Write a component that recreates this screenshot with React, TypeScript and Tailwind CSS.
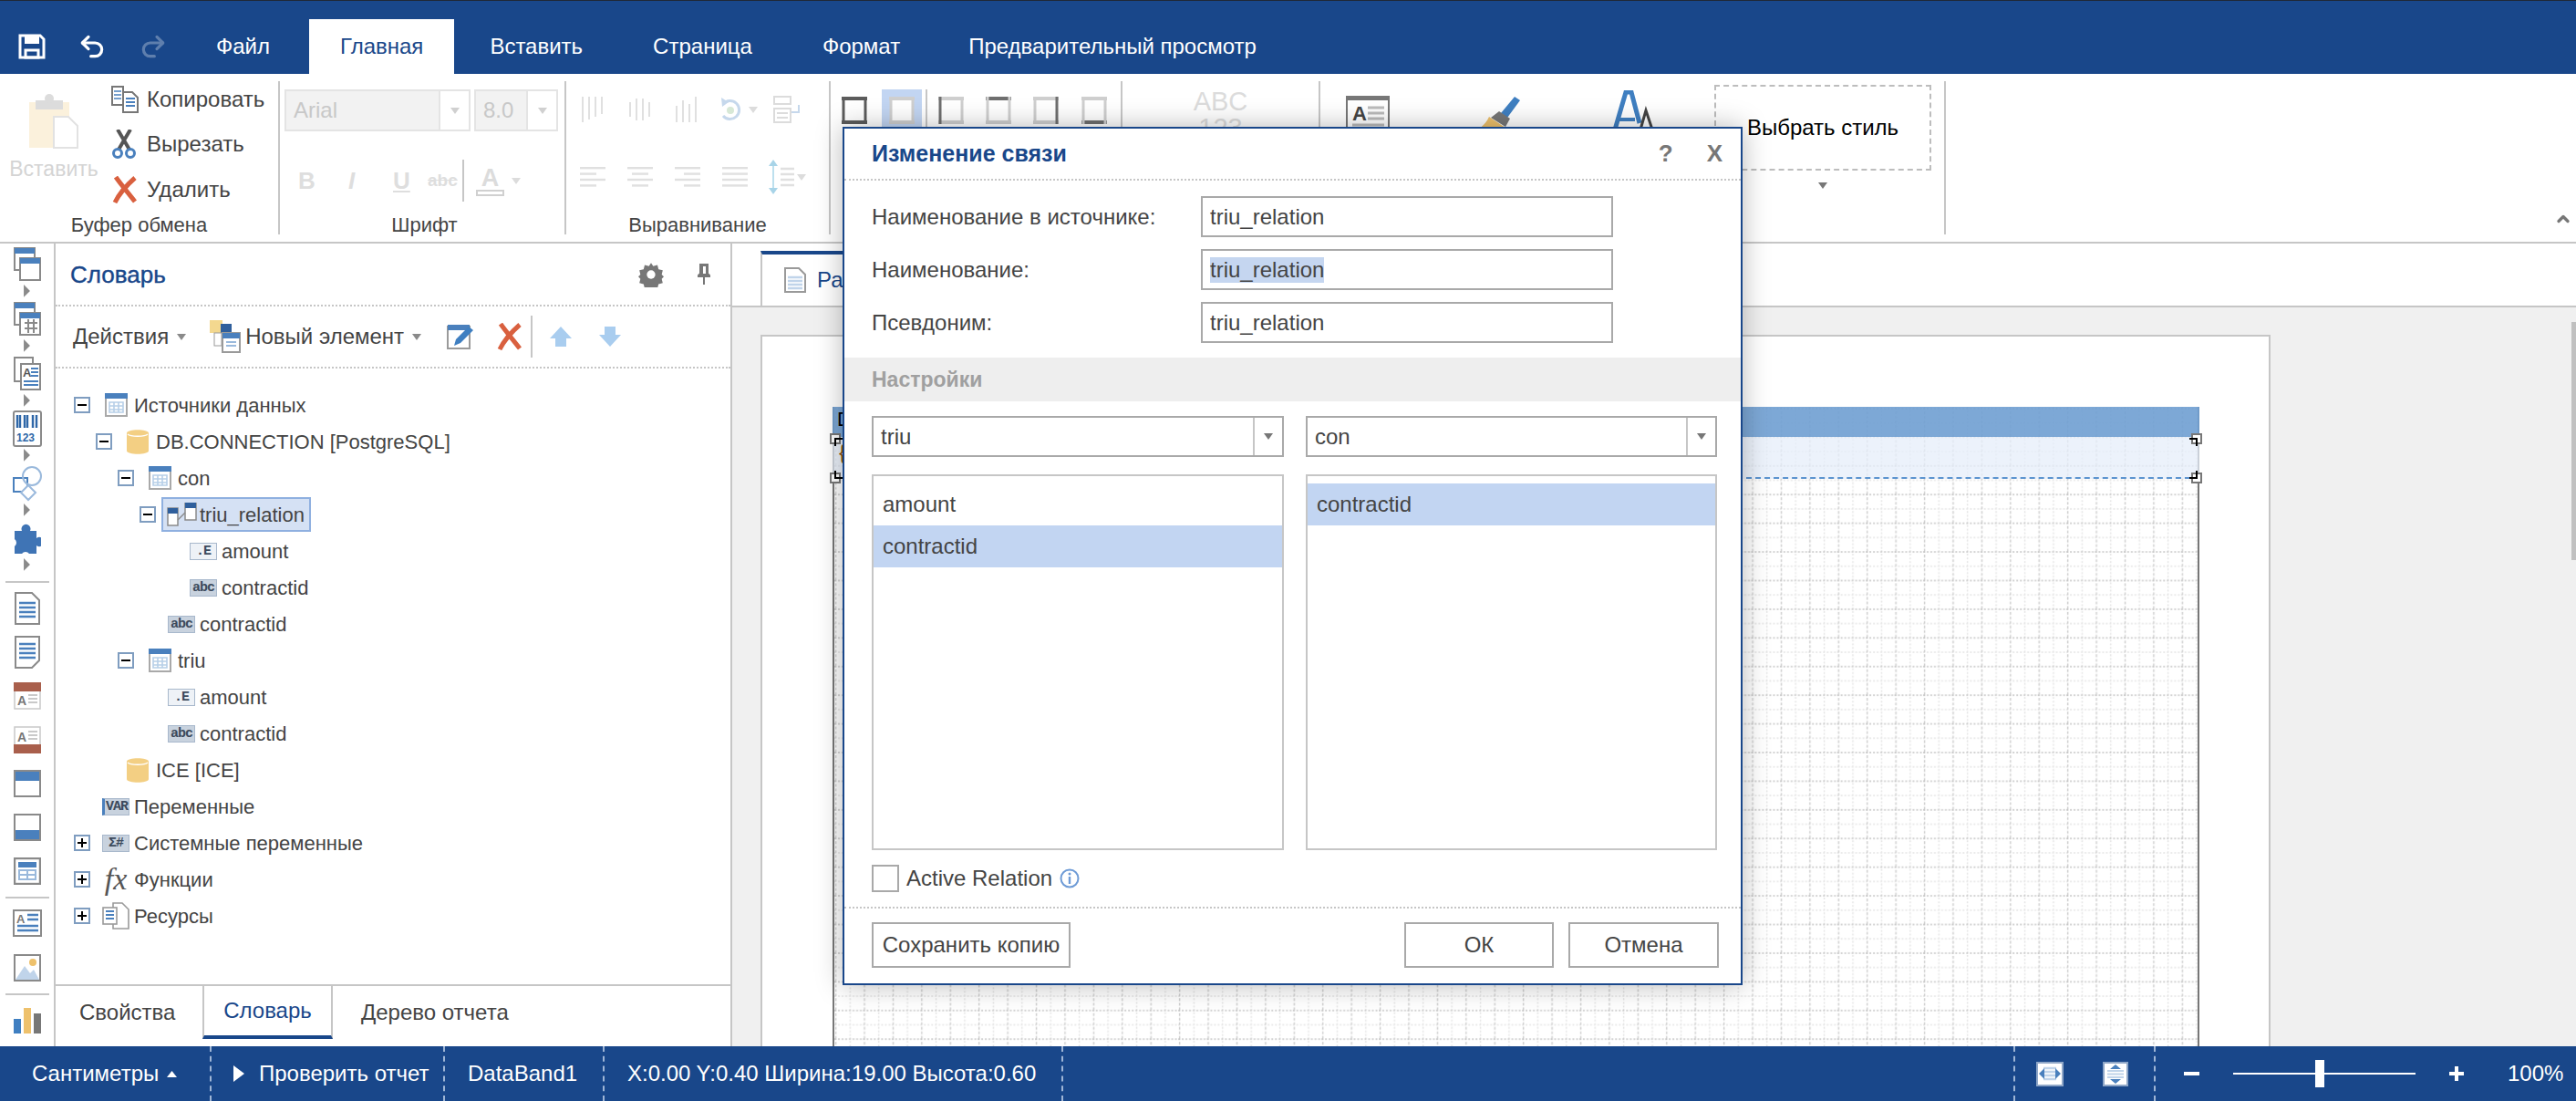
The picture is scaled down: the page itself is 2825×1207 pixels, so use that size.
import type { ReactNode } from "react";
import { Undo2, Redo2, ChevronUp } from "lucide-react";

const BLUE = "#4a80bd";

function Caret({ color = "#8a8a8a" }: { color?: string }) {
  return (
    <svg width="10" height="7" viewBox="0 0 10 7" className="shrink-0">
      <path d="M0 0h10L5 7z" fill={color} />
    </svg>
  );
}

function SaveIcon() {
  return (
    <svg width="30" height="28" viewBox="0 0 30 28" className="shrink-0">
      <path d="M2 2h22l4 4v20H2z" fill="none" stroke="#fff" strokeWidth="3" />
      <rect x="7" y="2" width="16" height="9" fill="#fff" />
      <rect x="8" y="18" width="14" height="8" fill="none" stroke="#fff" strokeWidth="3" />
    </svg>
  );
}

function PasteIcon() {
  return (
    <svg width="56" height="62" viewBox="0 0 56 62" className="shrink-0">
      <rect x="1" y="10" width="44" height="50" fill="#fbf1dc" />
      <rect x="8" y="8" width="30" height="10" fill="#dcdcdc" />
      <circle cx="23" cy="6" r="5" fill="#dcdcdc" />
      <path d="M28 26h16l10 10v24H28z" fill="#fff" stroke="#e2e2e2" strokeWidth="2" />
    </svg>
  );
}

function CopyIcon() {
  return (
    <svg width="30" height="30" viewBox="0 0 30 30" className="shrink-0">
      <path d="M1 1h12v20H1z" fill="#fff" stroke="#777" strokeWidth="2" />
      <path d="M3 6h8M3 10h8M3 14h8" stroke="#4a80bd" strokeWidth="1.5" />
      <path d="M13 7h10l6 6v16H13z" fill="#fff" stroke="#777" strokeWidth="2" />
      <path d="M16 14h10M16 18h10M16 22h10" stroke="#4a80bd" strokeWidth="2" />
    </svg>
  );
}

function CutIcon() {
  return (
    <svg width="28" height="32" viewBox="0 0 28 32" className="shrink-0">
      <path d="M7 0l13 22M21 0L8 22" stroke="#555" strokeWidth="4" />
      <circle cx="7" cy="26" r="4.5" fill="none" stroke="#4a80bd" strokeWidth="3" />
      <circle cx="21" cy="26" r="4.5" fill="none" stroke="#4a80bd" strokeWidth="3" />
    </svg>
  );
}

function CrossIcon({ size = 30 }: { size?: number }) {
  return (
    <svg width={size} height={size} viewBox="0 0 30 30" className="shrink-0">
      <path d="M5 1c4 6 14 18 21 27M26 2C18 9 9 19 4 29" fill="none" stroke="#d9603f" strokeWidth="5" />
    </svg>
  );
}

function AlignBars({ variant }: { variant: string }) {
  const xs = [2, 9, 16, 23];
  const tops: Record<string, number[]> = {
    t: [0, 0, 0, 0],
    m: [6, 2, 2, 6],
    b: [10, 4, 8, 0],
  };
  const t = tops[variant];
  return (
    <svg width="26" height="28" viewBox="0 0 26 28" className="shrink-0">
      {xs.map((x, i) => (
        <rect key={x} x={x} y={t[i]} width="2" height={28 - t[i] - (variant === "t" ? i * 3 : variant === "m" ? t[i] : 0)} fill="#e0e0e0" />
      ))}
    </svg>
  );
}

function RotateIcon() {
  return (
    <svg width="26" height="30" viewBox="0 0 26 30" className="shrink-0">
      <path d="M5 9a10 10 0 1 1 0 13" fill="none" stroke="#c6d8ec" strokeWidth="3" />
      <path d="M3 2l8 5-7 5z" fill="#c6d8ec" />
      <circle cx="13" cy="16" r="4" fill="#d7e8d6" />
    </svg>
  );
}

function WrapIcon() {
  return (
    <svg width="32" height="30" viewBox="0 0 32 30" className="shrink-0">
      <rect x="1" y="1" width="18" height="8" fill="none" stroke="#dcdcdc" strokeWidth="2" />
      <path d="M1 14h18v15H1z" fill="none" stroke="#dcdcdc" strokeWidth="2" />
      <path d="M4 19h12M4 24h12" stroke="#dcdcdc" strokeWidth="2" />
      <path d="M28 10v8h-8" fill="none" stroke="#c6d8ec" strokeWidth="2" />
    </svg>
  );
}

function TextAlign({ variant }: { variant: "l" | "c" | "r" | "j" }) {
  const rows = [28, 18, 28, 18];
  return (
    <svg width="28" height="22" viewBox="0 0 28 22" className="shrink-0">
      {rows.map((w, i) => {
        const width = variant === "j" ? 28 : w;
        const x = variant === "l" || variant === "j" ? 0 : variant === "c" ? (28 - width) / 2 : 28 - width;
        return <rect key={i} x={x} y={i * 6.4} width={width} height="2.4" fill="#e0e0e0" />;
      })}
    </svg>
  );
}

function LineSpacing() {
  return (
    <svg width="30" height="40" viewBox="0 0 30 40" className="shrink-0">
      <path d="M6 4v32" stroke="#bde0ee" strokeWidth="2" />
      <path d="M1 8l5-7 5 7zM1 32l5 7 5-7z" fill="#a8d4e8" />
      <path d="M14 11h15M14 17h15M14 23h15M14 29h15" stroke="#e0e0e0" strokeWidth="2.4" />
    </svg>
  );
}

function BorderIcon({ sides, strong }: { sides: string; strong?: boolean }) {
  const dark = strong ? "#5c5c5c" : "#6f6f6f";
  const light = "#cfcfcf";
  return (
    <svg width="28" height="30" viewBox="0 0 28 30" className="shrink-0">
      <rect x="2" y="2" width="24" height="26" fill="#fff" />
      <path d="M0 2h28" stroke={sides.includes("t") ? dark : light} strokeWidth="4" />
      <path d="M0 28h28" stroke={sides.includes("b") ? dark : light} strokeWidth="4" />
      <path d="M2 0v30" stroke={sides.includes("l") ? dark : light} strokeWidth="3" />
      <path d="M26 0v30" stroke={sides.includes("r") ? dark : light} strokeWidth="3" />
    </svg>
  );
}

function FormIcon() {
  return (
    <svg width="52" height="46" viewBox="0 0 52 46" className="shrink-0">
      <rect x="1" y="1" width="46" height="44" fill="#fff" stroke="#777" strokeWidth="2" />
      <rect x="1" y="1" width="46" height="4" fill="#777" />
      <text x="7" y="27" fontSize="22" fontWeight="700" fill="#444" fontFamily="Liberation Sans">A</text>
      <path d="M24 13h18M24 19h18M24 25h18M7 32h35M7 38h35" stroke="#bbb" strokeWidth="3" />
    </svg>
  );
}

function BrushIcon() {
  return (
    <svg width="58" height="60" viewBox="0 0 58 60" className="shrink-0">
      <path d="M48 1l6 4-14 19-7-5z" fill="#3f7fc1" />
      <path d="M31 17l12 8-5 9-16-10z" fill="#777" />
      <path d="M20 23l18 12c-4 8-10 14-14 18L0 40c8-2 16-8 20-17z" fill="#eec16c" />
    </svg>
  );
}

function FontStyleIcon() {
  return (
    <svg width="56" height="66" viewBox="0 0 56 66" className="shrink-0">
      <path d="M2 50L16 2h6l9 34" fill="none" stroke="#3f7fc1" strokeWidth="5" />
      <path d="M8 32h18" stroke="#3f7fc1" strokeWidth="4" />
      <path d="M26 64l12-42 14 42" fill="none" stroke="#444" strokeWidth="3" />
    </svg>
  );
}

function Vr({ className = "" }: { className?: string }) {
  return <div className={`w-[2px] shrink-0 bg-[#c6c6c6] ${className}`} />;
}

function GroupLabel({ children }: { children: ReactNode }) {
  return <div className="text-center text-[22px] leading-[20px] text-[#444]">{children}</div>;
}

function Combo({ text, w, split }: { text: string; w: string; split: string }) {
  return (
    <div className={`flex h-[46px] items-center border-2 border-[#e4e4e4] bg-[#f2f2f2] ${w}`}>
      <span className="flex-1 pl-[8px] text-[24px] text-[#c8c8c8]">{text}</span>
      <span className={`flex h-full items-center justify-center border-l-2 border-[#e4e4e4] bg-white ${split}`}>
        <Caret color="#d0d0d0" />
      </span>
    </div>
  );
}

function Ribbon() {
  return (
    <div className="relative flex h-[186px] shrink-0 border-b-2 border-[#c6c6c6] bg-white pt-[8px]">
      {/* clipboard */}
      <div className="flex h-[168px] w-[305px] shrink-0 flex-col">
        <div className="flex h-[134px]">
          <div className="flex w-[117px] shrink-0 flex-col items-center pt-[13px] pl-[1px]">
            <PasteIcon />
            <span className="mt-[10px] text-[23px] leading-none text-[#d4d4d4]">Вставить</span>
          </div>
          <div className="-mt-[5px] flex flex-col">
            {[
              [<CopyIcon key="c" />, "Копировать"],
              [<CutIcon key="x" />, "Вырезать"],
              [<CrossIcon key="d" />, "Удалить"],
            ].map(([icon, label], i) => (
              <div key={i} className="flex h-[49.5px] shrink-0 items-center text-[24px] text-[#444]">
                <span className="flex w-[44px] justify-start pl-[5px]">{icon}</span>
                {label}
              </div>
            ))}
          </div>
        </div>
        <div className="mt-auto"><GroupLabel>Буфер обмена</GroupLabel></div>
      </div>
      <Vr className="h-[168px]" />
      {/* font */}
      <div className="flex h-[168px] w-[312px] shrink-0 flex-col pl-[5px]">
        <div className="mt-[9px] flex gap-[4px]">
          <Combo text="Arial" w="w-[204px]" split="w-[33px]" />
          <Combo text="8.0" w="w-[92px]" split="w-[33px]" />
        </div>
        <div className="mt-[31px] flex h-[46px] items-center text-[#dedede]">
          <span className="w-[50px] pl-[15px] text-[26px] font-bold">B</span>
          <span className="w-[54px] pl-[20px] text-[26px] font-bold italic">I</span>
          <span className="w-[52px] pl-[15px] text-[26px] font-bold underline">U</span>
          <span className="w-[39px] pl-[1px] text-[19px] font-bold line-through">abc</span>
          <Vr className="mr-[13px] h-[46px]" />
          <span className="flex flex-col items-center">
            <span className="text-[27px] leading-[26px] font-bold text-[#dcdcdc]">A</span>
            <span className="h-[7px] w-[31px] border-2 border-[#d0d0d0] bg-white" />
          </span>
          <span className="ml-[8px]"><Caret color="#dcdcdc" /></span>
        </div>
        <div className="mt-auto"><GroupLabel>Шрифт</GroupLabel></div>
      </div>
      <Vr className="h-[168px]" />
      {/* align */}
      <div className="flex h-[168px] w-[288px] shrink-0 flex-col">
        <div className="mt-[16px] flex items-center pl-[15px]">
          <AlignBars variant="t" />
          <span className="ml-[26px]"><AlignBars variant="m" /></span>
          <span className="ml-[25px]"><AlignBars variant="b" /></span>
          <span className="ml-[23px]"><RotateIcon /></span>
          <span className="ml-[7px]"><Caret color="#dcdcdc" /></span>
          <span className="ml-[17px]"><WrapIcon /></span>
        </div>
        <div className="mt-[39px] flex items-center pl-[15px]">
          <TextAlign variant="l" />
          <span className="ml-[24px]"><TextAlign variant="c" /></span>
          <span className="ml-[24px]"><TextAlign variant="r" /></span>
          <span className="ml-[24px]"><TextAlign variant="j" /></span>
          <span className="ml-[22px]"><LineSpacing /></span>
          <span className="ml-[2px]"><Caret color="#dcdcdc" /></span>
        </div>
        <div className="mt-auto"><GroupLabel>Выравнивание</GroupLabel></div>
      </div>
      <Vr className="h-[168px]" />
      {/* borders */}
      <div className="flex h-[168px] w-[318px] shrink-0 items-start pl-[12px] pt-[9px]">
        <span className="flex h-[46px] items-center pr-[16px]"><BorderIcon sides="tblr" strong /></span>
        <span className="flex h-[46px] w-[44px] items-center justify-center bg-[#c2d5f2]"><BorderIcon sides="" /></span>
        <Vr className="ml-[4px] h-[42px]" />
        <span className="flex h-[46px] items-center pl-[12px]"><BorderIcon sides="l" /></span>
        <span className="flex h-[46px] items-center pl-[24px]"><BorderIcon sides="t" /></span>
        <span className="flex h-[46px] items-center pl-[24px]"><BorderIcon sides="r" /></span>
        <span className="flex h-[46px] items-center pl-[25px]"><BorderIcon sides="b" /></span>
      </div>
      <Vr className="h-[168px]" />
      <div className="flex h-[168px] w-[215px] shrink-0 flex-col items-center pt-[8px] text-[29px] leading-[29px] text-[#dcdcdc]">
        <span>ABC</span>
        <span>123</span>
      </div>
      <Vr className="h-[168px]" />
      {/* style */}
      <div className="flex h-[168px] w-[432px] shrink-0 items-start pl-[28px] pt-[16px]">
        <FormIcon />
        <span className="ml-[85px]"><BrushIcon /></span>
        <span className="-mt-[6px] ml-[96px]"><FontStyleIcon /></span>
      </div>
      <div className="flex h-[168px] w-[252px] shrink-0 flex-col items-start">
        <div className="mt-[4px] flex h-[94px] w-[238px] items-center justify-center border-2 border-dashed border-[#bdbdbd] text-[24px] text-black">
          Выбрать стиль
        </div>
        <span className="mt-[13px] ml-[114px]"><Caret color="#777" /></span>
      </div>
      <Vr className="h-[168px]" />
      <ChevronUp className="absolute right-[4px] top-[149px] h-[20px] w-[20px] text-[#777]" strokeWidth={4} />
    </div>
  );
}

function Frame({ top, bottom, children }: { top?: boolean; bottom?: boolean; children?: ReactNode }) {
  return (
    <div className="relative h-[30px] w-[30px] border-2 border-[#8a8a8a] bg-white">
      {top && <div className="h-[10px] bg-[#4a80bd]" />}
      {children}
      {bottom && <div className="absolute inset-x-0 bottom-0 h-[10px] bg-[#4a80bd]" />}
    </div>
  );
}

function BandIcon({ kind }: { kind: number }) {
  return (
    <svg width="30" height="38" viewBox="0 0 30 38">
      <rect x="1" y="1" width="22" height="24" fill="#fff" stroke="#8a8a8a" strokeWidth="2" />
      <rect x="1" y="1" width="22" height="6" fill={BLUE} />
      <rect x="7" y="12" width="22" height="24" fill="#fff" stroke="#8a8a8a" strokeWidth="2" />
      <rect x="7" y="12" width="22" height="6" fill={BLUE} />
      {kind === 1 && <path d="M12 23h14M12 29h14M16 19v15M22 19v15" stroke="#8a8a8a" strokeWidth="2" />}
    </svg>
  );
}

function SideIcons() {
  const top = [
    <BandIcon key="a" kind={0} />,
    <BandIcon key="b" kind={1} />,
    <svg key="c" width="30" height="38" viewBox="0 0 30 38">
      <rect x="1" y="1" width="20" height="26" fill="#fff" stroke="#8a8a8a" strokeWidth="2" />
      <rect x="8" y="8" width="21" height="28" fill="#fff" stroke="#8a8a8a" strokeWidth="2" />
      <text x="10" y="22" fontSize="13" fontWeight="700" fill="#555" fontFamily="Liberation Sans">A</text>
      <path d="M19 13h8M19 17h8M19 21h8M11 27h16M11 31h16" stroke={BLUE} strokeWidth="2" />
    </svg>,
    <svg key="d" width="32" height="40" viewBox="0 0 32 40">
      <rect x="1" y="1" width="30" height="38" rx="2" fill="#fff" stroke="#8a8a8a" strokeWidth="2" />
      <path d="M5 5v14M8 5v14M13 5v14M16 5v14M22 5v14M26 5v14" stroke="#2f67a8" strokeWidth="2.4" />
      <text x="4" y="34" fontSize="12" fontWeight="700" fill="#2f67a8" fontFamily="Liberation Sans">123</text>
    </svg>,
    <svg key="e" width="32" height="40" viewBox="0 0 32 40">
      <rect x="1" y="14" width="15" height="15" fill="#fff" stroke={BLUE} strokeWidth="2" />
      <circle cx="21" cy="12" r="10" fill="none" stroke="#9ab9dc" strokeWidth="2" />
      <path d="M17 22l8 8-8 8-8-8z" fill="#fff" stroke="#9ab9dc" strokeWidth="2" />
    </svg>,
    <svg key="f" width="30" height="36" viewBox="0 0 30 36">
      <path d="M1 10h8a5 5 0 1 1 9 0h7v8a5 5 0 1 1 0 8v9h-8a5 5 0 0 0-8 0H1v-8a5 5 0 0 0 0-8z" fill="#3f74b5" />
    </svg>,
  ];
  const docs = (flip: boolean) => (
    <svg width="28" height="36" viewBox="0 0 28 36" className={flip ? "-scale-y-100" : ""}>
      <path d="M1 1h18l8 8v26H1z" fill="#fff" stroke="#8a8a8a" strokeWidth="2" />
      <path d="M5 12h18M5 17h18M5 22h18M5 27h18" stroke={BLUE} strokeWidth="2.6" />
    </svg>
  );
  const redBox = (flip: boolean) => (
    <svg width="30" height="30" viewBox="0 0 30 30">
      <rect x="1" y="1" width="28" height="28" fill="#fff" stroke="#c9c9c9" strokeWidth="1.5" />
      <rect x="0" y={flip ? 20 : 0} width="30" height="10" fill="#a95f4c" />
      <text x="4" y={flip ? 17 : 25} fontSize="14" fontWeight="700" fill="#777" fontFamily="Liberation Sans">A</text>
      <path d={flip ? "M16 6h10M16 10h10M16 14h10" : "M16 14h10M16 18h10M16 22h10"} stroke="#c9c9c9" strokeWidth="2" />
    </svg>
  );
  const mid = [
    docs(false),
    docs(true),
    redBox(false),
    redBox(true),
    <Frame key="h" top />,
    <Frame key="f" bottom />,
    <svg key="t" width="30" height="30" viewBox="0 0 30 30">
      <rect x="1" y="1" width="28" height="28" fill="#fff" stroke="#8a8a8a" strokeWidth="2.4" />
      <rect x="5" y="5" width="20" height="6" fill={BLUE} />
      <path d="M6 14h18v10H6z M15 14v10M6 19h18" fill="none" stroke="#9ab9dc" strokeWidth="2" />
    </svg>,
  ];
  return (
    <div className="flex w-[61px] shrink-0 flex-col items-center border-r-2 border-[#c6c6c6] bg-white">
      {top.map((icon, i) => (
        <div key={i} className="flex h-[60px] w-full flex-col items-center justify-end">
          <div className="flex h-[46px] items-center">{icon}</div>
          <svg width="7" height="14" viewBox="0 0 7 14" className="mb-[1px]"><path d="M0 0l7 7-7 7z" fill="#8a8a8a" /></svg>
        </div>
      ))}
      <div className="mt-[10px] mb-[4px] h-[2px] w-[48px] bg-[#c6c6c6]" />
      {mid.map((icon, i) => (
        <div key={i} className="flex h-[48px] items-center">{icon}</div>
      ))}
      <div className="mt-[4px] mb-[3px] h-[2px] w-[48px] bg-[#c6c6c6]" />
      <div className="flex h-[48px] items-center">
        <svg width="32" height="30" viewBox="0 0 32 30">
          <rect x="1" y="1" width="30" height="28" fill="#fff" stroke="#8a8a8a" strokeWidth="2" />
          <text x="4" y="15" fontSize="13" fontWeight="700" fill="#777" fontFamily="Liberation Sans">A</text>
          <path d="M16 6h12M16 11h12M5 18h23M5 23h23" stroke={BLUE} strokeWidth="2.4" />
        </svg>
      </div>
      <div className="flex h-[49px] items-center">
        <svg width="30" height="30" viewBox="0 0 30 30">
          <rect x="1" y="1" width="28" height="28" fill="#fff" stroke="#8a8a8a" strokeWidth="2" />
          <circle cx="21" cy="9" r="4" fill="#eec16c" />
          <path d="M2 28l10-15 6 8 4-4 6 11z" fill="#c0d4ea" />
        </svg>
      </div>
      <div className="mt-[4px] mb-[4px] h-[2px] w-[48px] bg-[#c6c6c6]" />
      <div className="flex h-[48px] items-center">
        <svg width="30" height="28" viewBox="0 0 30 28">
          <rect x="0" y="12" width="8" height="16" fill="#3f7fc1" />
          <rect x="11" y="0" width="8" height="28" fill="#eec16c" />
          <rect x="22" y="6" width="8" height="22" fill="#777" />
        </svg>
      </div>
    </div>
  );
}

function TableIcon() {
  return (
    <svg width="25" height="26" viewBox="0 0 25 26">
      <rect x="1" y="1" width="23" height="24" fill="#fff" stroke="#a9a9a9" strokeWidth="2" />
      <rect x="0" y="0" width="25" height="6" fill={BLUE} />
      <path d="M5 10h15v11H5z M10 10v11M15 10v11M5 14h15M5 18h15" fill="none" stroke="#b7cfe8" strokeWidth="1.6" />
    </svg>
  );
}

function DbIcon() {
  return (
    <svg width="24" height="27" viewBox="0 0 24 27">
      <path d="M0 4c0-5 24-5 24 0v19c0 5-24 5-24 0z" fill="#f3cf83" />
      <path d="M1 5c3 3 19 3 22 0" fill="none" stroke="#fff" strokeWidth="1.4" />
    </svg>
  );
}

function RelationIcon() {
  return (
    <svg width="33" height="26" viewBox="0 0 33 26">
      <rect x="1" y="6" width="11" height="19" fill="#fff" stroke="#8a8a8a" strokeWidth="1.5" />
      <rect x="1" y="6" width="11" height="6" fill="#2f5f9c" />
      <rect x="20" y="0" width="12" height="19" fill="#fff" stroke="#8a8a8a" strokeWidth="1.5" />
      <rect x="20" y="0" width="12" height="6" fill="#2f5f9c" />
      <path d="M12 19l8-8" stroke="#8a8a8a" strokeWidth="1.5" />
    </svg>
  );
}

function TypeBox({ text, dark, leftBlue }: { text: string; dark?: boolean; leftBlue?: boolean }) {
  return (
    <span
      className={`flex h-[19px] w-[30px] items-center justify-center border border-[#a8b8cc] font-['Liberation_Mono',monospace] text-[15px] leading-none font-bold tracking-[-1px] text-[#3c4a5c] ${dark ? "bg-[#c8d2de]" : "bg-[#eef2f7]"} ${leftBlue ? "border-l-[3px] border-l-[#4a80bd]" : ""}`}
    >
      {text}
    </span>
  );
}

function FxIcon() {
  return <span className="font-['Liberation_Serif',serif] text-[34px] leading-none text-[#555] italic">fx</span>;
}

function ResIcon() {
  return (
    <svg width="30" height="30" viewBox="0 0 30 30">
      <path d="M12 1h10l7 7v21H12z" fill="#fff" stroke="#9a9a9a" strokeWidth="1.6" />
      <rect x="1" y="6" width="15" height="18" fill="#fff" stroke="#9a9a9a" strokeWidth="1.6" />
      <path d="M4 10h9M4 14h9M4 18h9" stroke={BLUE} strokeWidth="2" />
    </svg>
  );
}

function Toggle({ plus }: { plus?: boolean }) {
  return (
    <span className="relative flex h-[18px] w-[18px] shrink-0 items-center justify-center border-2 border-[#7f9dc0] bg-white">
      <span className="h-[2px] w-[10px] bg-black" />
      {plus && <span className="absolute h-[10px] w-[2px] bg-black" />}
    </span>
  );
}

type Node = {
  level: number;
  label: string;
  icon: ReactNode;
  toggle?: "minus" | "plus";
  selected?: boolean;
};

const nodes: Node[] = [
  { level: 0, label: "Источники данных", icon: <TableIcon />, toggle: "minus" },
  { level: 1, label: "DB.CONNECTION [PostgreSQL]", icon: <DbIcon />, toggle: "minus" },
  { level: 2, label: "con", icon: <TableIcon />, toggle: "minus" },
  { level: 3, label: "triu_relation", icon: <RelationIcon />, toggle: "minus", selected: true },
  { level: 4, label: "amount", icon: <TypeBox text=".E" /> },
  { level: 4, label: "contractid", icon: <TypeBox text="abc" dark /> },
  { level: 3, label: "contractid", icon: <TypeBox text="abc" dark /> },
  { level: 2, label: "triu", icon: <TableIcon />, toggle: "minus" },
  { level: 3, label: "amount", icon: <TypeBox text=".E" /> },
  { level: 3, label: "contractid", icon: <TypeBox text="abc" dark /> },
  { level: 1, label: "ICE [ICE]", icon: <DbIcon /> },
  { level: 0, label: "Переменные", icon: <TypeBox text="VAR" dark leftBlue /> },
  { level: 0, label: "Системные переменные", icon: <TypeBox text="Σ#" dark />, toggle: "plus" },
  { level: 0, label: "Функции", icon: <FxIcon />, toggle: "plus" },
  { level: 0, label: "Ресурсы", icon: <ResIcon />, toggle: "plus" },
];

function Tree() {
  return (
    <div className="flex-1 pt-[20px] text-[22px] text-[#444]">
      {nodes.map((n, i) => (
        <div key={i} className="flex h-[40px] items-center" style={{ paddingLeft: 20 + n.level * 24 }}>
          <span className="flex w-[18px] shrink-0 justify-center">
            {n.toggle && <Toggle plus={n.toggle === "plus"} />}
          </span>
          <div
            className={`ml-[6px] flex h-[38px] items-center border-2 pr-[5px] pl-[2px] ${n.selected ? "border-[#8fb0e0] bg-[#d5e1f4]" : "border-transparent"}`}
          >
            <span className="flex w-[36px] shrink-0 justify-center">{n.icon}</span>
            <span className="ml-[2px] whitespace-nowrap">{n.label}</span>
          </div>
        </div>
      ))}
    </div>
  );
}

function Dictionary() {
  return (
    <div className="flex w-[742px] shrink-0 flex-col border-r-2 border-[#c6c6c6] bg-white">
      <div className="flex h-[69px] shrink-0 items-center border-b-2 border-dotted border-[#c6c6c6] pl-[16px] pr-[22px]">
        <span className="flex-1 text-[26px] leading-none font-medium text-[#19478a] [-webkit-text-stroke:0.4px_#19478a]">Словарь</span>
        <svg width="28" height="28" viewBox="0 0 24 24" className="mr-[37px]">
          <path d="M12 1l2 3 4-1 1 4 4 1-1 4 2 2-2 2 1 4-4 1-1 4-4-1-2 2-2-2-4 1-1-4-4-1 1-4-2-2 2-2-1-4 4-1 1-4 4 1z" fill="#777" />
          <circle cx="12" cy="12" r="4" fill="#fff" />
        </svg>
        <svg width="14" height="24" viewBox="0 0 14 24">
          <path d="M3 1h8v10l3 3H0l3-3zM7 14v9" fill="#777" stroke="#777" strokeWidth="2" />
          <rect x="6" y="3" width="3" height="8" fill="#fff" />
        </svg>
      </div>
      <div className="flex h-[68px] shrink-0 items-center border-b-2 border-dotted border-[#c6c6c6] pl-[19px] text-[24px] text-[#444]">
        <span>Действия</span>
        <span className="ml-[9px]"><Caret /></span>
        <svg width="34" height="36" viewBox="0 0 34 36" className="ml-[26px]">
          <rect x="0" y="0" width="14" height="14" fill="#f3d88f" />
          <rect x="12" y="4" width="12" height="14" fill="#2f5f9c" />
          <rect x="5" y="14" width="8" height="14" fill="#fff" stroke="#9a9a9a" />
          <rect x="14" y="14" width="19" height="21" fill="#fff" stroke="#9a9a9a" strokeWidth="2" />
          <rect x="14" y="14" width="19" height="6" fill={BLUE} />
          <path d="M18 24h11M18 28h11" stroke="#9ab9dc" strokeWidth="2" />
        </svg>
        <span className="ml-[5px]">Новый элемент</span>
        <span className="ml-[9px]"><Caret /></span>
        <svg width="30" height="28" viewBox="0 0 30 28" className="ml-[28px]">
          <rect x="1" y="3" width="24" height="24" fill="#fff" stroke="#9a9a9a" strokeWidth="2" />
          <rect x="1" y="1" width="24" height="6" fill={BLUE} />
          <path d="M8 24l2-7L24 3l5 4-14 14z" fill="#3f7fc1" />
        </svg>
        <span className="ml-[24px]"><CrossIcon size={30} /></span>
        <Vr className="ml-[8px] h-[46px]" />
        <svg width="24" height="22" viewBox="0 0 24 22" className="ml-[19px]"><path d="M12 0l12 13h-6v9H6v-9H0z" fill="#a9cdef" /></svg>
        <svg width="24" height="22" viewBox="0 0 24 22" className="ml-[30px]"><path d="M6 0h12v9h6L12 22 0 9h6z" fill="#a9cdef" /></svg>
      </div>
      <Tree />
      <div className="flex h-[68px] shrink-0 items-start border-t-2 border-[#c6c6c6] text-[24px] text-[#444]">
        <div className="flex h-[58px] w-[161px] items-center pl-[26px]">Свойства</div>
        <div className="flex h-[58px] w-[143px] items-center justify-center border-x-2 border-b-[4px] border-x-[#c6c6c6] border-b-[#19478a] text-[#19478a]">Словарь</div>
        <div className="flex h-[58px] items-center pl-[31px]">Дерево отчета</div>
      </div>
    </div>
  );
}

function Grid() {
  return (
    <svg className="absolute inset-0 h-full w-full">
      <defs>
        <pattern id="grid" width="31.42" height="31.42" patternUnits="userSpaceOnUse">
          <path d="M17.3 0v31.42M0 17.7h31.42" stroke="#e4e4e4" strokeWidth="1.5" strokeDasharray="2 2" fill="none" />
          <path d="M1.6 0v31.42" stroke="#cfcfcf" strokeWidth="1.5" strokeDasharray="3 2" fill="none" />
          <path d="M0 2h31.42" stroke="#c4c4c4" strokeWidth="1.5" strokeDasharray="2 2" fill="none" />
        </pattern>
      </defs>
      <rect width="100%" height="100%" fill="url(#grid)" />
    </svg>
  );
}

function Handle({ className, mark }: { className: string; mark: string }) {
  return (
    <span className={`absolute h-[12px] w-[12px] border-2 border-[#777] bg-white ${className}`}>
      <span className={`absolute h-[9px] w-[9px] border-black ${mark}`} />
    </span>
  );
}

function Canvas() {
  return (
    <div className="flex min-w-0 flex-1 flex-col">
      <div className="flex h-[70px] shrink-0 items-end border-b-2 border-[#c6c6c6] bg-white pl-[31px]">
        <div className="flex h-[60px] w-[400px] items-center border-t-[4px] border-l-2 border-t-[#19478a] border-l-[#c6c6c6] pl-[24px] text-[24px] text-[#19478a]">
          <svg width="24" height="28" viewBox="0 0 24 28">
            <path d="M1 1h15l7 7v19H1z" fill="#fff" stroke="#9a9a9a" strokeWidth="2" />
            <path d="M4 11h16M4 15h16M4 19h16M4 23h16" stroke="#c0d4ea" strokeWidth="2.4" />
          </svg>
          <span className="ml-[12px]">Ра</span>
        </div>
      </div>
      <div className="relative min-h-0 flex-1 overflow-hidden bg-[#f0f0f0] pt-[30px] pl-[31px]">
        <div className="h-full w-[1656px] border-x-2 border-t-2 border-[#c6c6c6] bg-white pt-[77px] pl-[77px]">
          <div className="relative h-full w-[1499px] border-x-2 border-[#777]">
            <Grid />
            <div className="absolute -inset-x-[2px] top-0 h-[33px] bg-[#6f9fd2]/90 pl-[5px] text-[22px] leading-[28px] text-black">DataBand1</div>
            <div className="absolute -inset-x-[2px] top-[33px] h-[46px] border-b-2 border-dashed border-[#5b93cf] bg-[#e6eef9]/75 pl-[7px] text-[22px] text-[#8a4b00]">{"{"}</div>
            <Handle className="top-[29px] -left-[5px]" mark="left-[3px] top-[3px] border-t-2 border-l-2" />
            <Handle className="top-[72px] -left-[5px]" mark="left-[3px] bottom-[3px] border-b-2 border-l-2" />
            <Handle className="top-[29px] -right-[5px]" mark="right-[3px] top-[3px] border-t-2 border-r-2" />
            <Handle className="top-[72px] -right-[5px]" mark="right-[3px] bottom-[3px] border-b-2 border-r-2" />
          </div>
        </div>
        <div className="absolute top-[16px] right-0 h-[261px] w-[5px] bg-[#c0c0c0]" />
      </div>
    </div>
  );
}

function Field({ label, selected }: { label: string; selected?: boolean }) {
  return (
    <div className="flex h-[45px] items-center">
      <span className="w-[361px] text-[24px] leading-[26px] text-[#444]">{label}</span>
      <div className="flex h-full w-[452px] items-center border-2 border-[#a9a9a9] pl-[8px] text-[24px] text-[#444]">
        <span className={selected ? "bg-[#c5d6f0] leading-[28px]" : ""}>triu_relation</span>
      </div>
    </div>
  );
}

function Select({ value, w }: { value: string; w: string }) {
  return (
    <div className={`flex h-[45px] items-center border-2 border-[#a9a9a9] text-[24px] text-[#444] ${w}`}>
      <span className="flex-1 pl-[8px]">{value}</span>
      <span className="flex h-full w-[32px] items-center justify-center border-l-2 border-[#c6c6c6]">
        <Caret color="#777" />
      </span>
    </div>
  );
}

function ListBox({ items, active, w }: { items: string[]; active: string; w: string }) {
  return (
    <div className={`h-[412px] border-2 border-[#c6c6c6] pt-[8px] text-[24px] text-[#444] ${w}`}>
      {items.map((it) => (
        <div key={it} className={`flex h-[46px] items-center pl-[10px] ${it === active ? "bg-[#c2d5f2]" : ""}`}>
          {it}
        </div>
      ))}
    </div>
  );
}

function DialogButton({ children, w }: { children: ReactNode; w: string }) {
  return (
    <button className={`h-[50px] border-2 border-[#a9a9a9] bg-white text-[24px] text-[#444] ${w}`}>{children}</button>
  );
}

function Dialog() {
  return (
    <div className="absolute top-[139px] left-[924px] flex h-[941px] w-[987px] flex-col border-2 border-[#19478a] bg-white shadow-[0_0_28px_rgba(0,0,0,0.28)]">
      <div className="flex h-[57px] shrink-0 items-center border-b-2 border-dotted border-[#c6c6c6] pr-[20px] pl-[30px]">
        <span className="flex-1 text-[25px] font-bold text-[#19478a]">Изменение связи</span>
        <span className="text-[26px] font-bold text-[#777]">?</span>
        <span className="ml-[37px] text-[26px] font-bold text-[#777]">X</span>
      </div>
      <div className="flex flex-col gap-[13px] pt-[17px] pl-[30px]">
        <Field label="Наименование в источнике:" />
        <Field label="Наименование:" selected />
        <Field label="Псевдоним:" />
      </div>
      <div className="mt-[16px] flex h-[48px] shrink-0 items-center bg-[#eeeeee] pl-[30px] text-[23px] font-bold text-[#a0a0a0]">
        Настройки
      </div>
      <div className="mt-[16px] flex gap-[24px] pl-[30px]">
        <Select value="triu" w="w-[452px]" />
        <Select value="con" w="w-[451px]" />
      </div>
      <div className="mt-[19px] flex gap-[24px] pl-[30px]">
        <ListBox items={["amount", "contractid"]} active="contractid" w="w-[452px]" />
        <ListBox items={["contractid"]} active="contractid" w="w-[451px]" />
      </div>
      <div className="mt-[16px] flex h-[30px] items-center pl-[30px] text-[24px] text-[#444]">
        <span className="h-[30px] w-[30px] border-2 border-[#a9a9a9]" />
        <span className="ml-[8px]">Active Relation</span>
        <svg width="22" height="22" viewBox="0 0 22 22" className="ml-[8px]">
          <circle cx="11" cy="11" r="9.5" fill="none" stroke="#6e9bd6" strokeWidth="2" />
          <path d="M11 9v8" stroke="#6e9bd6" strokeWidth="2.4" />
          <circle cx="11" cy="6" r="1.5" fill="#6e9bd6" />
        </svg>
      </div>
      <div className="mt-[16px] flex flex-1 items-start border-t-2 border-dotted border-[#c6c6c6] pt-[15px] pr-[24px] pl-[30px]">
        <DialogButton w="w-[218px]">Сохранить копию</DialogButton>
        <span className="flex-1" />
        <DialogButton w="w-[164px]">ОК</DialogButton>
        <span className="w-[16px]" />
        <DialogButton w="w-[165px]">Отмена</DialogButton>
      </div>
    </div>
  );
}

function Dash() {
  return <div className="h-full w-0 shrink-0 border-l-2 border-dashed border-[#9fb6d6]" />;
}

function StatusBar() {
  return (
    <div className="flex h-[60px] shrink-0 items-center bg-[#19478a] text-[24px] text-white">
      <div className="flex w-[230px] shrink-0 items-center pl-[35px]">
        Сантиметры
        <svg width="11" height="7" viewBox="0 0 11 7" className="ml-[9px]"><path d="M0 7h11L5.5 0z" fill="#fff" /></svg>
      </div>
      <Dash />
      <div className="flex w-[254px] shrink-0 items-center pl-[24px]">
        <svg width="12" height="18" viewBox="0 0 12 18"><path d="M0 0l12 9-12 9z" fill="#fff" /></svg>
        <span className="ml-[16px]">Проверить отчет</span>
      </div>
      <Dash />
      <div className="w-[173px] shrink-0 pl-[25px]">DataBand1</div>
      <Dash />
      <div className="w-[501px] shrink-0 pl-[25px]">X:0.00 Y:0.40 Ширина:19.00 Высота:0.60</div>
      <Dash />
      <div className="flex-1" />
      <Dash />
      <div className="flex w-[152px] shrink-0 items-center pl-[23px]">
        <svg width="30" height="27" viewBox="0 0 30 27">
          <rect x="1" y="1" width="28" height="25" fill="#fff" stroke="#8fa7c8" strokeWidth="2" />
          <path d="M8 7h14M8 11h14M8 15h14M8 19h14" stroke="#c0d4ea" strokeWidth="2.6" />
          <path d="M3 13l6-6v12zM27 13l-6-6v12z" fill="#4a80bd" />
        </svg>
        <svg width="28" height="27" viewBox="0 0 28 27" className="ml-[43px]">
          <rect x="1" y="1" width="26" height="25" fill="#fff" stroke="#8fa7c8" strokeWidth="2" />
          <path d="M5 10h18M5 13.5h18M5 17h18" stroke="#c0d4ea" strokeWidth="2.2" />
          <path d="M14 3l6 5H8zM14 24l6-5H8z" fill="#4a80bd" />
        </svg>
      </div>
      <Dash />
      <div className="ml-[31px] h-[4px] w-[17px] shrink-0 bg-white" />
      <div className="relative ml-[37px] flex h-[30px] w-[200px] shrink-0 items-center">
        <div className="h-[2px] w-full bg-white" />
        <div className="absolute left-[90px] h-[30px] w-[10px] bg-white" />
      </div>
      <div className="relative ml-[37px] h-[16px] w-[16px] shrink-0">
        <div className="absolute top-[6px] h-[4px] w-full bg-white" />
        <div className="absolute left-[6px] h-full w-[4px] bg-white" />
      </div>
      <div className="ml-[48px] w-[75px] shrink-0">100%</div>
    </div>
  );
}

export default function App() {
  return (
    <div className="relative flex h-screen flex-col overflow-hidden bg-white font-['Liberation_Sans',Arial,sans-serif]">
      <div className="flex h-[81px] shrink-0 items-end border-t border-[#1f2937] bg-[#19478a] text-[24px] text-white">
        <div className="flex h-[60px] items-center pl-[20px]">
          <SaveIcon />
          <Undo2 className="ml-[35px] h-[32px] w-[32px] text-white" strokeWidth={2.4} />
          <Redo2 className="ml-[35px] h-[32px] w-[32px] text-white opacity-30" strokeWidth={2.4} />
        </div>
        <div className="ml-[19px] flex h-[60px] items-center">
          <div className="flex h-full items-center px-[34px]">Файл</div>
          <div className="ml-[9px] flex h-full items-center bg-white px-[34px] text-[#19478a]">Главная</div>
          <div className="ml-[5px] flex h-full items-center px-[34px]">Вставить</div>
          <div className="ml-[9px] flex h-full items-center px-[34px]">Страница</div>
          <div className="ml-[9px] flex h-full items-center px-[34px]">Формат</div>
          <div className="ml-[7px] flex h-full items-center px-[34px]">Предварительный просмотр</div>
        </div>
      </div>
      <Ribbon />
      <div className="flex min-h-0 flex-1">
        <SideIcons />
        <Dictionary />
        <Canvas />
      </div>
      <StatusBar />
      <Dialog />
    </div>
  );
}
